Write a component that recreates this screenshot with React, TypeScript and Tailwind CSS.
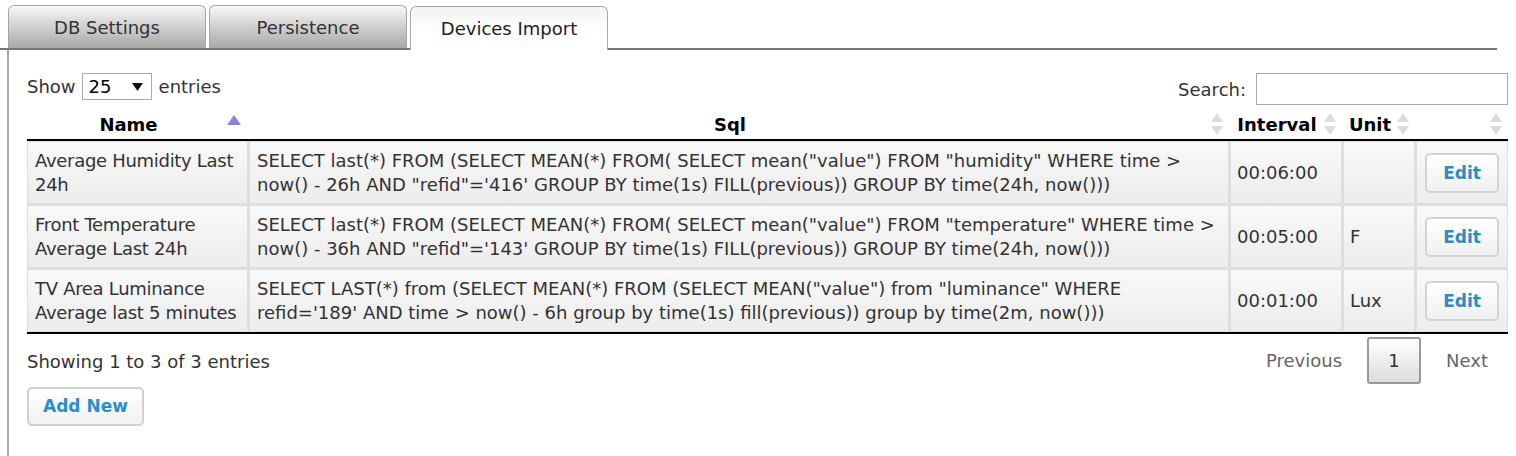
const font = "font-['DejaVu_Sans',sans-serif]";

const rows = [
  {
    name: "Average Humidity Last 24h",
    sql: `SELECT last(*) FROM (SELECT MEAN(*) FROM( SELECT mean("value") FROM "humidity" WHERE time > now() - 26h AND "refid"='416' GROUP BY time(1s) FILL(previous)) GROUP BY time(24h, now()))`,
    interval: "00:06:00",
    unit: "",
  },
  {
    name: "Front Temperature Average Last 24h",
    sql: `SELECT last(*) FROM (SELECT MEAN(*) FROM( SELECT mean("value") FROM "temperature" WHERE time > now() - 36h AND "refid"='143' GROUP BY time(1s) FILL(previous)) GROUP BY time(24h, now()))`,
    interval: "00:05:00",
    unit: "F",
  },
  {
    name: "TV Area Luminance Average last 5 minutes",
    sql: `SELECT LAST(*) from (SELECT MEAN(*) FROM (SELECT MEAN("value") from "luminance" WHERE refid='189' AND time > now() - 6h group by time(1s) fill(previous)) group by time(2m, now()))`,
    interval: "00:01:00",
    unit: "Lux",
  },
];

const cols = "grid grid-cols-[219px_978px_110px_70px_1fr] gap-[3px]";
const cell = "h-[61px] flex items-center bg-gradient-to-b from-[#f9f9f9] to-[#ececec] text-[18px] leading-[24px]";

function SortArrows({ active }: { active?: boolean }) {
  if (active) {
    return (
      <svg width="14" height="10" viewBox="0 0 14 10" className="absolute right-[6px] top-[6px]">
        <polygon points="7,0 14,10 0,10" fill="#8585de" />
      </svg>
    );
  }
  return (
    <svg width="12" height="22" viewBox="0 0 12 22" className="absolute right-[5px] top-[4px]">
      <polygon points="6,0 12,9 0,9" fill="#dcdcdc" />
      <polygon points="6,22 12,13 0,13" fill="#dcdcdc" />
    </svg>
  );
}

function HeaderCell({ label, active }: { label?: string; active?: boolean }) {
  return (
    <div className="relative h-[30px] pr-[18px] flex items-center justify-center font-bold text-black text-[18px]">
      {label}
      <SortArrows active={active} />
    </div>
  );
}

function Tab({ label, active }: { label: string; active?: boolean }) {
  if (active) {
    return (
      <div className="w-[198px] h-[44px] -mb-[2px] rounded-t-[6px] border border-b-0 border-[#aaaaaa] bg-gradient-to-b from-[#f2f2f2] via-white to-white flex items-center justify-center text-[18px] text-[#222]">
        {label}
      </div>
    );
  }
  return (
    <div className="w-[198px] h-[43px] rounded-t-[6px] border border-b-0 border-[#a5a5a5] bg-gradient-to-b from-[#f7f7f7] to-[#a9a9a9] flex items-center justify-center text-[18px] text-[#333]">
      {label}
    </div>
  );
}

export default function App() {
  return (
    <div className={`w-[1516px] h-[456px] bg-white text-[#333] overflow-hidden ${font}`}>
      <div className="flex items-end pl-[8px] pt-[5px] gap-[3px] w-[1497px] border-b-2 border-[#777]">
        <Tab label="DB Settings" />
        <Tab label="Persistence" />
        <Tab label="Devices Import" active />
      </div>
      <div className="ml-[7px] border-l-2 border-[#aaaaaa] h-[410px] pl-[18px] pr-[8px]">
        <div className="flex items-start justify-between pt-[23px] text-[18px]">
          <div className="flex items-center gap-[6px]">
            <span>Show</span>
            <div className="w-[70px] h-[27px] border border-[#aaa] flex items-center justify-between pl-[6px] pr-[8px] text-black">
              <span>25</span>
              <svg width="11" height="8" viewBox="0 0 11 8">
                <polygon points="0,0 11,0 5.5,8" fill="#111" />
              </svg>
            </div>
            <span className="ml-[1px]">entries</span>
          </div>
          <div className="flex items-center gap-[10px]">
            <span className="mt-[1px]">Search:</span>
            <div className="w-[252px] h-[32px] border border-[#aaa]" />
          </div>
        </div>

        <div className={`${cols} px-[1px] mt-[4px]`}>
          <HeaderCell label="Name" active />
          <HeaderCell label="Sql" />
          <HeaderCell label="Interval" />
          <HeaderCell label="Unit" />
          <HeaderCell />
        </div>

        <div className={`${cols} p-[1px] bg-[#dedede] border-y-2 border-black`}>
          {rows.map((r) => [
            <div key={r.name + "n"} className={`${cell} pl-[7px] pr-[2px] tracking-[-0.3px]`}>
              {r.name}
            </div>,
            <div key={r.name + "s"} className={`${cell} px-[7px]`}>
              {r.sql}
            </div>,
            <div key={r.name + "i"} className={`${cell} px-[6px]`}>
              {r.interval}
            </div>,
            <div key={r.name + "u"} className={`${cell} px-[6px]`}>
              {r.unit}
            </div>,
            <div key={r.name + "e"} className={`${cell} justify-center`}>
              <button className="w-[74px] h-[40px] rounded-[5px] border-2 border-[#d4d4d4] bg-gradient-to-b from-white to-[#f1f1f1] text-[#2a8fc5] font-bold text-[17px]">
                Edit
              </button>
            </div>,
          ])}
        </div>

        <div className="flex items-start justify-between">
          <div className="flex flex-col items-start">
            <span className="mt-[14px] text-[18px]">Showing 1 to 3 of 3 entries</span>
            <button className="mt-[12px] w-[117px] h-[39px] rounded-[5px] border-2 border-[#d0d0d0] bg-gradient-to-b from-white to-[#f1f1f1] text-[#2a8fc5] font-bold text-[17px]">
              Add New
            </button>
          </div>
          <div className="flex items-center mt-[3px] pr-[20px] text-[18px] text-[#666]">
            <span className="mr-[25px]">Previous</span>
            <span className="w-[54px] h-[47px] rounded-[3px] border-2 border-[#999] bg-gradient-to-b from-white to-[#dcdcdc] flex items-center justify-center text-[#333]">
              1
            </span>
            <span className="ml-[25px]">Next</span>
          </div>
        </div>
      </div>
    </div>
  );
}
